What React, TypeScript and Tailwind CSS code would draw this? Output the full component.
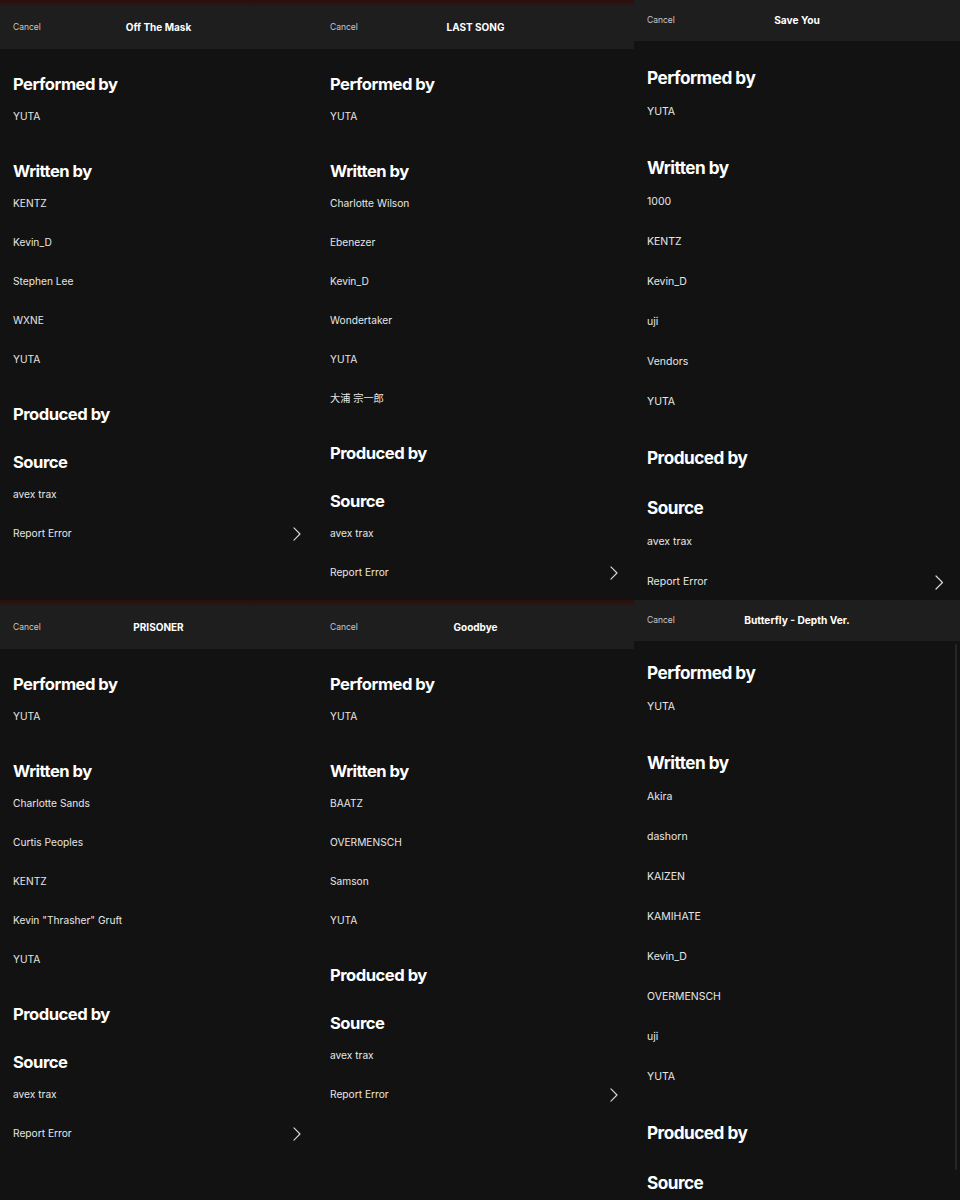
import React from "react";

type Variant = "narrow" | "wide";

type Credits = {
  title: string;
  writers: string[];
  variant: Variant;
  strip?: boolean;
  tight?: boolean;
};

const font = { fontFamily: 'Inter, "Noto Sans CJK JP", sans-serif' };

function Chevron({ size }: { size: number }) {
  return (
    <svg width={size * 0.6} height={size} viewBox="0 0 9 15" fill="none" className="shrink-0">
      <path d="M1 1l6.5 6.5L1 14" stroke="#d9d9d9" strokeWidth="1.2" strokeLinecap="round" strokeLinejoin="round" />
    </svg>
  );
}

function Heading({ children, variant }: { children: React.ReactNode; variant: Variant }) {
  return (
    <div
      className={
        variant === "narrow"
          ? "h-[24px] pb-[2px] flex items-center text-[16.6px] font-bold tracking-[-0.03em] text-white"
          : "h-[26px] pb-[2px] flex items-center text-[17.2px] font-bold tracking-[-0.03em] text-white"
      }
    >
      {children}
    </div>
  );
}

function Item({ children, variant }: { children: React.ReactNode; variant: Variant }) {
  return (
    <div
      className={
        variant === "narrow"
          ? "h-[39px] flex items-center text-[10.2px] text-[#e6e6e6]"
          : "h-[40px] flex items-center text-[10.5px] text-[#e6e6e6]"
      }
    >
      {children}
    </div>
  );
}

function Panel({ title, writers, variant, strip, tight }: Credits) {
  const narrow = variant === "narrow";
  return (
    <div className="relative h-[600px] overflow-hidden bg-[#121212] flex flex-col">
      {strip && <div className="h-[6px] bg-gradient-to-b from-[#2e0b0b] to-[#1f1c1c]" />}
      <div
        className={
          narrow
            ? "h-[43px] shrink-0 grid grid-cols-[1fr_auto_1fr] items-center px-[13px] bg-[#1e1e1e]"
            : "h-[41px] shrink-0 grid grid-cols-[1fr_auto_1fr] items-center px-[13px] bg-[#1e1e1e]"
        }
      >
        <span className="text-[8.5px] text-[#c8c8c8]">Cancel</span>
        <span className={narrow ? "text-[10px] font-bold text-white" : "text-[10.2px] font-bold text-white"}>
          {title}
        </span>
        <span />
      </div>
      <div
        className={
          "flex flex-col px-[13px] " +
          (narrow ? "gap-[24px] pt-[24px]" : tight ? "gap-[24px] pt-[20px]" : "gap-[24px] pt-[25px]")
        }
      >
        <div>
          <Heading variant={variant}>Performed by</Heading>
          <Item variant={variant}>YUTA</Item>
        </div>
        <div>
          <Heading variant={variant}>Written by</Heading>
          {writers.map((w) => (
            <Item key={w} variant={variant}>
              {w}
            </Item>
          ))}
        </div>
        <Heading variant={variant}>Produced by</Heading>
        <div>
          <Heading variant={variant}>Source</Heading>
          <Item variant={variant}>avex trax</Item>
          <div
            className={
              narrow
                ? "h-[39px] flex items-center justify-between pr-[3px] text-[10.2px] text-[#e6e6e6]"
                : "h-[40px] flex items-center justify-between pr-[3px] text-[10.5px] text-[#e6e6e6]"
            }
          >
            <span>Report Error</span>
            <Chevron size={narrow ? 14 : 15} />
          </div>
        </div>
      </div>
      {tight && <div className="absolute right-[3px] top-[44px] bottom-[30px] w-[2px] rounded bg-[#262626]" />}
    </div>
  );
}

const columns: Credits[][] = [
  [
    { title: "Off The Mask", writers: ["KENTZ", "Kevin_D", "Stephen Lee", "WXNE", "YUTA"], variant: "narrow", strip: true },
    {
      title: "PRISONER",
      writers: ["Charlotte Sands", "Curtis Peoples", "KENTZ", 'Kevin "Thrasher" Gruft', "YUTA"],
      variant: "narrow",
      strip: true,
    },
  ],
  [
    {
      title: "LAST SONG",
      writers: ["Charlotte Wilson", "Ebenezer", "Kevin_D", "Wondertaker", "YUTA", "大浦 宗一郎"],
      variant: "narrow",
      strip: true,
    },
    { title: "Goodbye", writers: ["BAATZ", "OVERMENSCH", "Samson", "YUTA"], variant: "narrow", strip: true },
  ],
  [
    { title: "Save You", writers: ["1000", "KENTZ", "Kevin_D", "uji", "Vendors", "YUTA"], variant: "wide" },
    {
      title: "Butterfly - Depth Ver.",
      writers: ["Akira", "dashorn", "KAIZEN", "KAMIHATE", "Kevin_D", "OVERMENSCH", "uji", "YUTA"],
      variant: "wide",
      tight: true,
    },
  ],
];

export default function App() {
  return (
    <div className="w-[960px] h-[1200px] overflow-hidden bg-[#121212] grid grid-cols-[317px_317px_326px]" style={font}>
      {columns.map((col, i) => (
        <div key={i} className="flex flex-col">
          {col.map((p) => (
            <Panel key={p.title} {...p} />
          ))}
        </div>
      ))}
    </div>
  );
}
